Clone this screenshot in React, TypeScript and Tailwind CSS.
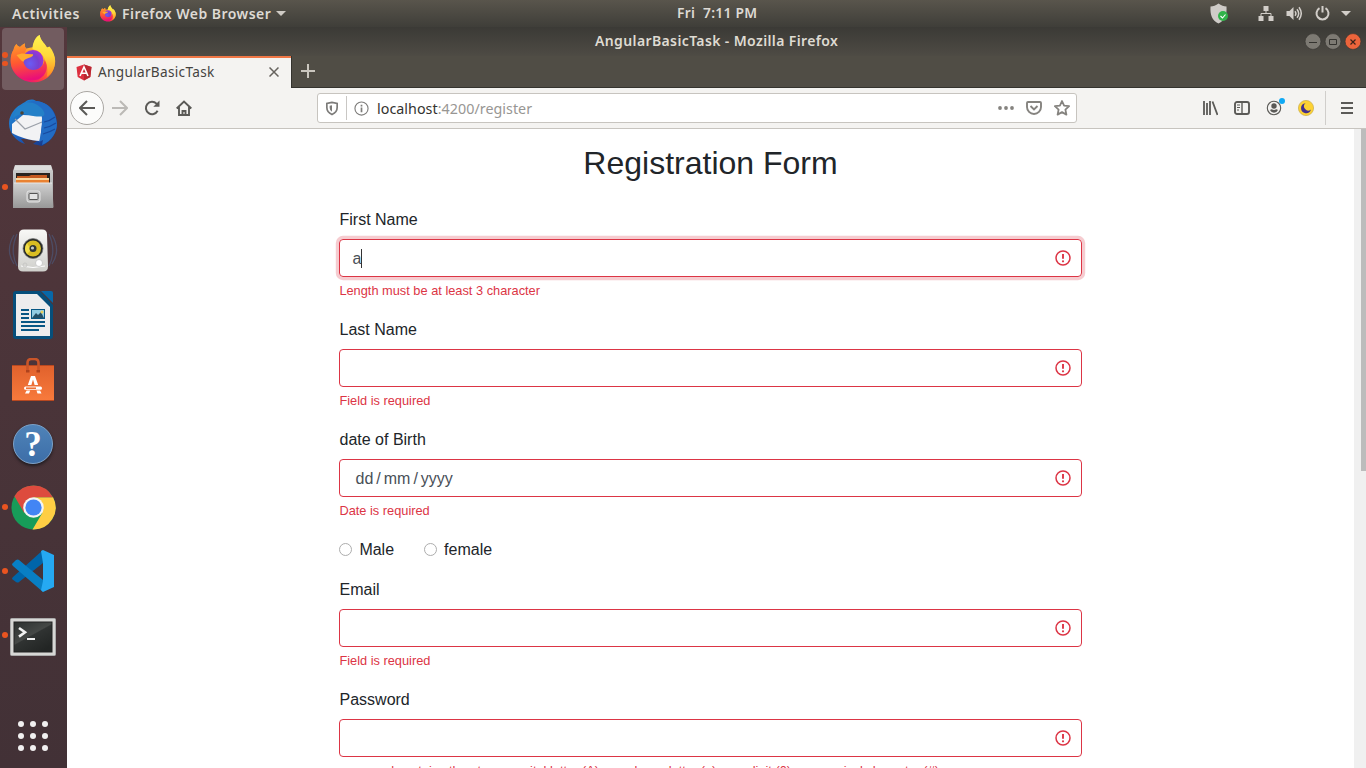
import React from "react";

const ui = "font-['Noto_Sans',sans-serif]";

function Firefox({ id, className }: { id: string; className: string }) {
  return (
    <svg viewBox="0 0 46 48" className={className}>
      <defs>
        <linearGradient id={`${id}a`} x1="0.8" y1="0" x2="0.25" y2="1">
          <stop offset="0" stopColor="#fff44f" />
          <stop offset="0.35" stopColor="#ffb52a" />
          <stop offset="0.7" stopColor="#ff4b3c" />
          <stop offset="1" stopColor="#e8087c" />
        </linearGradient>
        <radialGradient id={`${id}b`} cx="0.35" cy="0.65" r="0.7">
          <stop offset="0" stopColor="#6a5cf5" />
          <stop offset="0.6" stopColor="#7740d0" />
          <stop offset="1" stopColor="#a232d8" />
        </radialGradient>
        <linearGradient id={`${id}c`} x1="0" y1="0" x2="0" y2="1">
          <stop offset="0" stopColor="#fff44f" />
          <stop offset="0.5" stopColor="#ffd83a" />
          <stop offset="1" stopColor="#ff8a1f" />
        </linearGradient>
        <linearGradient id={`${id}d`} x1="0.2" y1="0" x2="0.4" y2="1">
          <stop offset="0" stopColor="#ff9a2a" />
          <stop offset="0.5" stopColor="#ff5a30" />
          <stop offset="1" stopColor="#ea0f78" />
        </linearGradient>
      </defs>
      <path d="M3.500 15c.3-2 1.500-4.500 3-6 .8 2 2 2.500 3.500 3 1.500-1.500 3-3 5-3.500-.5 2 0 4 1.300 5L23.500 12c-.5-5 2.200-10.500 6.200-12 .4 5 4.800 8 7.300 12.500l2.500 1c3 3.500 5.700 8 5.500 13.500C44.500 39 35.500 47.300 23.500 47.300S.7 38 .7 26c0-4.500.8-8 2.800-11z" fill={`url(#${id}a)`} />
      <path d="M22.500 14c0-6 3.200-12 7.200-14 .4 5 4.800 8 7.300 12.500l2.500-1c3.500 4 5.700 9.500 5.700 14.500 0 7-3.500 13-8.500 16 2.500-10-1.200-21-8.700-26z" fill={`url(#${id}c)`} />
      <circle cx="23" cy="25.500" r="10.500" fill={`url(#${id}b)`} />
      <path d="M3.500 15c.3-2 1.500-4.500 3-6 .8 2 2 2.500 3.500 3 1.500-1.500 3-3 5-3.500-.5 2 0 4 1.300 5.500L14 20c-1 2-1.500 4-.5 7 1.200 5 5 8 9.500 8 6.500 0 11-4.500 11.500-10 4.500 6 2.500 15-6 19.500C16 47.500 1 41 .7 26c0-4.500.8-8 2.800-11z" fill={`url(#${id}d)`} />
      <path d="M6.500 20c4-1.800 7-2 11-1l5.500.3c.8 1.700-2 3.200-5 3.900-3 .8-4 2-4.500 3.500-2-.5-4.500-3.500-7-6.700z" fill="#ffa92e" />
    </svg>
  );
}

function Thunderbird() {
  return (
    <svg viewBox="0 0 48 48" className="w-12 h-12">
      <defs>
        <linearGradient id="tb" x1="0" y1="0" x2="1" y2="1">
          <stop offset="0" stopColor="#2491d8" />
          <stop offset=".5" stopColor="#1c5dbb" />
          <stop offset="1" stopColor="#162c76" />
        </linearGradient>
      </defs>
      <path d="M16 3C20 0 24 0 27 2c12 1 21 10 21 23 0 10-7 18-15 22l-9-2 4-3-12-2-4 0 4 5C7 42 0 34 0 25c0-7 3-12 7-16 3-3 6-4 9-6z" fill="url(#tb)" />
      <path d="M3 25 14 16l20 1-3 25C22 42 10 38 3 34z" fill="#f2f2f4" />
      <path d="M6 20l10 10 17-7" stroke="#9ba0a9" strokeWidth="1.200" fill="none" />
      <path d="M17 3c9 1 15 7 16 16 0 9-1 17-3 24l4-2-1 5c10-4 15-13 15-21C47 11 37 2 26 2z" fill="#226cc4" />
      <path d="M15 5c-7 4-9 8-11 14 3-2 6-4 10-4s14 4 20 2c3-1 1-6-3-9-4-4-11-6-16-3z" fill="#2480c8" />
      <path d="M35 23q6-1 11-5M35 29q6-1 12-5M34 35q7-2 12-5" stroke="#184a9f" strokeWidth="1.200" fill="none" />
      <circle cx="13" cy="14" r="1.800" fill="#4c4335" />
    </svg>
  );
}

function Files() {
  return (
    <svg viewBox="0 0 42 44" className="w-[42px] h-11">
      <defs>
        <linearGradient id="fi" x1="0" y1="0" x2="0" y2="1">
          <stop offset="0" stopColor="#d0d0d0" />
          <stop offset="1" stopColor="#999" />
        </linearGradient>
      </defs>
      <path d="M3 0h36l2 6v37H1V6z" fill="url(#fi)" />
      <path d="M3 1h36l1 4H2z" fill="#ddd" />
      <path d="M4 8h34v11H4z" fill="#29231f" />
      <path d="M5 11h12l2-1h16v8H5z" fill="#c75a20" />
      <path d="M4 13h33v2H4z" fill="#fbd59d" />
      <path d="M4 15h33v4H4z" fill="#e98232" />
      <path d="M2 18h38l1.500 24.500h-40z" fill="url(#fi)" />
      <path d="M2 18h38" stroke="#e8e8e8" />
      <rect x="15" y="26" width="13" height="11" rx="2" fill="#bdbdbd" stroke="#e6e6e6" />
      <rect x="17" y="28.500" width="9" height="6" rx="1" fill="#e3e3e3" stroke="#555" />
    </svg>
  );
}

function Rhythmbox() {
  return (
    <svg viewBox="0 0 50 44" className="w-[50px] h-11">
      <defs>
        <linearGradient id="rh" x1="0" y1="0" x2="0" y2="1">
          <stop offset="0" stopColor="#f8f8f6" />
          <stop offset="1" stopColor="#cfcfcb" />
        </linearGradient>
      </defs>
      <path d="M6 6C0 16 0 26 6 35M9 5C4 16 4 27 9 37M44 6c6 10 6 20 0 29M41 5c5 11 5 22 0 32" stroke="#4d5b80" strokeWidth="1.300" fill="none" opacity=".6" />
      <path d="M16 .5h18q5 0 5 5l1 32q0 5-5 5H15q-5 0-5-5l1-32q0-5 5-5z" fill="url(#rh)" />
      <path d="M13 37q12 3 24 0" stroke="#fff" fill="none" />
      <circle cx="25" cy="19.500" r="10" fill="#272a28" stroke="#777" strokeWidth=".7" />
      <circle cx="25" cy="19.500" r="8" fill="#d9bd22" />
      <path d="M19 14q-4 6 0 11l4-4z" fill="#f1dd49" />
      <circle cx="25" cy="19.500" r="3.500" fill="#303634" />
      <circle cx="24.500" cy="19" r="1.600" fill="#c4cbc9" />
      <circle cx="31" cy="34" r="3.500" fill="#fff" stroke="#bbb" strokeWidth=".7" />
      <circle cx="17" cy="36" r="2" fill="none" stroke="#c7c7c5" />
    </svg>
  );
}

function Writer() {
  return (
    <svg viewBox="0 0 40 48" className="w-10 h-12">
      <path d="M3 0h24l13 14v31q0 3-3 3H3q-3 0-3-3V3Q0 0 3 0z" fill="#064f7b" />
      <path d="M28 0h10q2 0 2 2v10z" fill="#0868a8" />
      <path d="M3 3h21l13 13v29H3z" fill="#ededed" />
      <path d="M8 19h8M8 23h8M8 27h8M8 31h24M8 35h24M8 39h18" stroke="#075784" strokeWidth="2" />
      <rect x="18" y="18" width="14" height="10" fill="#075784" />
      <path d="M19 19h12v8H19z" fill="#91cce3" />
      <path d="m19 27 4-5 2 2 3-3 3 6z" fill="#234f66" />
      <circle cx="29" cy="21" r="1.500" fill="#e8ce5a" />
    </svg>
  );
}

function Software() {
  return (
    <svg viewBox="0 0 42 43" className="w-[42px] h-[43px]">
      <defs>
        <linearGradient id="sw" x1="0" y1="0" x2="0" y2="1">
          <stop offset="0" stopColor="#e0612c" />
          <stop offset="1" stopColor="#f87a3c" />
        </linearGradient>
      </defs>
      <path d="M0 7h42v35.500H0z" fill="url(#sw)" />
      <path d="M0 7.500h42M0 42.500h42" stroke="#b84820" />
      <path d="M15.500 14V5q0-4 4-4h3q4 0 4 4v9" fill="none" stroke="#c95529" strokeWidth="2.600" />
      <path d="M14 12h3.500v2.500H14zM24.500 12H28v2.500h-3.500z" fill="#ad421d" />
      <path d="M19 18h4l3.200 9h-3.600L21 21.500 19.400 27h-3.600zM14.600 32.500h3.600L17 35.500h-4zM24.500 32.500h3.600l1.400 3h-4z" fill="#fff" />
      <path d="M13.500 28.500h15q1.500 0 1.500 1.700t-1.500 1.600h-15q-1.500 0-1.500-1.600t1.500-1.700z" fill="#fff" />
      <path d="M14 30.200h10" stroke="#ef6b2d" strokeWidth="1.500" />
    </svg>
  );
}

function Help() {
  return (
    <div className="mt-[2px] flex size-10 items-center justify-center rounded-full border-[1.5px] border-[#7ba2c9] bg-linear-to-b from-[#4f83b8] to-[#3d6ea8] font-['Liberation_Serif',serif] text-[35px] leading-none font-bold text-white shadow-[0_2px_3px_#221d22]">?</div>
  );
}

function Chrome() {
  return (
    <svg viewBox="0 0 46 46" className="w-[45px] h-[45px]">
      <circle cx="23" cy="23" r="22.500" fill="#179c59" />
      <path d="M23 12.500h20A22.500 22.500 0 0 1 22 45.500L32 28.500z" fill="#ffce44" />
      <path d="M3.500 11.500A22.500 22.500 0 0 1 42.800 12.500H23L13.500 28.500z" fill="#dd4b3e" />
      <circle cx="23" cy="23" r="10.500" fill="#f4f4f4" />
      <circle cx="23" cy="23" r="8.300" fill="#4285f4" />
    </svg>
  );
}

function Code() {
  return (
    <svg viewBox="0 0 42 42" className="w-[42px] h-[42px]">
      <path d="m0 29 4 3q2 1 3 0L31 13V0L1 27q-1 1-1 2z" fill="#0065a9" />
      <path d="m0 14 4-4q2-1 3 0l24 20v12L1 16q-1-1-1-2z" fill="#087fc4" />
      <path d="M31 0l11 5v32l-11 5-2-2 2-9V13l-2-12z" fill="#25a9f2" />
    </svg>
  );
}

function Terminal() {
  return (
    <svg viewBox="0 0 46 38" className="w-[46px] h-[38px]">
      <defs>
        <linearGradient id="te" x1="0" y1="0" x2=".7" y2="1">
          <stop offset="0" stopColor="#2c302f" />
          <stop offset=".5" stopColor="#454846" />
          <stop offset=".53" stopColor="#303332" />
          <stop offset="1" stopColor="#222524" />
        </linearGradient>
      </defs>
      <rect x=".5" y=".5" width="45" height="37" rx="1" fill="#d7d7d5" stroke="#aaa" />
      <rect x="4" y="4" width="38" height="30" fill="url(#te)" stroke="#222" />
      <path d="m9 10 6 4.300-6 4.300" stroke="#f2f2f2" strokeWidth="2.600" fill="none" />
      <path d="M17 21h8" stroke="#eee" strokeWidth="2" />
    </svg>
  );
}

function Grid9() {
  return (
    <div className="grid grid-cols-3 gap-1.5">
      {Array.from({ length: 9 }, (_, i) => (
        <span key={i} className="size-1.5 rounded-full bg-[#f1f0f0]" />
      ))}
    </div>
  );
}

const dock = [
  { icon: <Firefox id="dk" className="h-12 w-[46px]" />, dots: 2, active: true },
  { icon: <Thunderbird />, dots: 0 },
  { icon: <Files />, dots: 1 },
  { icon: <Rhythmbox />, dots: 0 },
  { icon: <Writer />, dots: 0 },
  { icon: <Software />, dots: 0 },
  { icon: <Help />, dots: 0 },
  { icon: <Chrome />, dots: 1 },
  { icon: <Code />, dots: 1 },
  { icon: <Terminal />, dots: 1, low: true },
];

function Dock() {
  return (
    <aside className="flex w-[67px] shrink-0 flex-col bg-linear-to-b from-[#54373c] via-[#4a3439] to-[#423136]">
      {dock.map((d, i) => (
        <div key={i} className="relative flex h-16 shrink-0 items-center justify-center">
          {d.active && <div className="absolute top-px left-0.5 h-[62px] w-[62px] rounded bg-[#725c60]" />}
          <div className={`relative -ml-px ${d.low ? "pt-1" : ""}`}>{d.icon}</div>
          <div className="absolute left-[2px] flex flex-col gap-[3px]">
            {Array.from({ length: d.dots }, (_, k) => (
              <span key={k} className="size-[5.5px] rounded-full bg-[#e95420]" />
            ))}
          </div>
        </div>
      ))}
      <div className="mt-auto flex justify-center pr-px pb-[17px]">
        <Grid9 />
      </div>
    </aside>
  );
}

function TopBar() {
  return (
    <header className={`relative flex h-[27px] shrink-0 items-center bg-linear-to-b from-[#59554c] to-[#3f3e39] font-semibold text-[#dedad4] ${ui}`}>
      <span className="ml-3 w-[68px] pb-px text-[14px] tracking-[0.55px] whitespace-nowrap">Activities</span>
      <Firefox id="tp" className="ml-5 h-[17px] w-4" />
      <span className="ml-[6px] w-[150px] pb-px text-[14px] tracking-[0.47px] whitespace-nowrap">Firefox Web Browser</span>
      <svg viewBox="0 0 10 5" className="ml-1 h-[5px] w-[10px]"><path d="M0 0h10L5 5z" fill="#cfcbc5" /></svg>
      <span className="absolute left-[677px] text-[13.8px] tracking-[0.3px] whitespace-pre">Fri  7:11 PM</span>
      <div className="ml-auto flex items-center">
        <svg viewBox="0 0 20 22" className="mr-[29px] h-[22px] w-5">
          <path d="M9.500 .5C7 2.500 4 3.500 1.500 3.500 1 12 3 17.500 9.500 20.500 16 17.500 18 12 17.500 3.500 15 3.500 12 2.500 9.500.5z" fill="#cecbc7" />
          <circle cx="14" cy="13" r="5" fill="#31b34a" />
          <path d="m11.500 13 2 2 3-3.500" fill="none" stroke="#fff" strokeWidth="1.100" />
        </svg>
        <svg viewBox="0 0 16 16" className="h-4 w-4 text-[#d2cec9]" fill="currentColor"><path d="M5.500 0h5v5h-5zM.5 10h5v5h-5zM10.500 10h5v5h-5z" /><path d="M8 5v2.500M3 10V7.500h10V10" stroke="currentColor" fill="none" /></svg>
        <svg viewBox="0 0 16 16" className="ml-3 h-4 w-4" fill="#d2cec9"><path d="M.5 5h3l4-4v13l-4-4h-3z" /><path d="M9 5.200q1.800 2.300 0 4.600M11 3.200q3.400 4.300 0 8.600M13 1.200q4.500 6.300 0 12.600" stroke="#d2cec9" strokeWidth="1.500" fill="none" /></svg>
        <svg viewBox="0 0 16 16" className="ml-3 h-4 w-4"><path d="M5.500 2.200a6 6 0 1 0 6 0M8.500 0v6.500" stroke="#d2cec9" strokeWidth="2" fill="none" /></svg>
        <svg viewBox="0 0 10 5" className="mr-[15px] ml-[11px] h-[5px] w-[10px]"><path d="M0 0h10L5 5z" fill="#d2cec9" /></svg>
      </div>
    </header>
  );
}

function TitleBar() {
  return (
    <div className={`relative flex h-[29px] items-center justify-end gap-1 bg-linear-to-b from-[#3b3a36] to-[#4e4b44] pr-[5px] ${ui}`}>
      <span className="absolute left-[528px] pb-0.5 text-[14px] font-semibold tracking-[0.38px] whitespace-nowrap text-[#dfdbd2]">AngularBasicTask - Mozilla Firefox</span>
      <svg viewBox="0 0 16 16" className="h-4 w-4 overflow-visible"><circle cx="8" cy="7.500" r="7.900" fill="#7d7a73" stroke="#34332f" strokeWidth=".6" /><path d="M4 8.500h8" stroke="#34332f" /></svg>
      <svg viewBox="0 0 16 16" className="h-4 w-4 overflow-visible"><circle cx="8" cy="7.500" r="7.900" fill="#7d7a73" stroke="#34332f" strokeWidth=".6" /><path d="M4.500 5.500h7v5h-7z" fill="none" stroke="#34332f" /></svg>
      <svg viewBox="0 0 16 16" className="h-4 w-4 overflow-visible"><circle cx="8" cy="7.500" r="7.900" fill="#ec643b" stroke="#34332f" strokeWidth=".6" /><path d="m5.500 5.500 5 5m0-5-5 5" stroke="#3b231a" strokeWidth="1.200" /></svg>
    </div>
  );
}

function Tabs() {
  return (
    <div className="flex h-8 border-b border-[#34332e] bg-[#504d45]">
      <div className={`-mb-px flex h-8 w-[224px] items-center border-t-2 border-[#f07746] bg-[#f4f3f1] text-[13.6px] text-[#45433f] ${ui}`}>
        <svg viewBox="0 0 16 17" className="mb-0.5 ml-[9px] h-[17px] w-4"><path d="M8 .5 15.500 3l-1.200 10L8 16.500 1.700 13 .5 3z" fill="#dd3040" /><path d="M8 .5 15.500 3l-1.200 10L8 16.500z" fill="#b92832" /><path d="m4 12 4-9 4 9M5.500 9.300h5" fill="none" stroke="#fff" strokeWidth="1.600" /></svg>
        <span className="ml-1.5 w-[121px] pb-0.5 tracking-[0.32px] whitespace-nowrap">AngularBasicTask</span>
        <svg viewBox="0 0 10 10" className="mr-3 mb-0.5 ml-auto h-[10px] w-[10px]"><path d="m.5.5 9 9m0-9-9 9" stroke="#66635e" strokeWidth="1.500" /></svg>
      </div>
      <div className="w-px bg-[#34332e]" />
      <svg viewBox="0 0 14 14" className="mt-2 ml-[9px] h-[14px] w-[14px]"><path d="M7 0v14M0 7h14" stroke="#cac6be" strokeWidth="2" /></svg>
    </div>
  );
}

function Toolbar() {
  return (
    <div className="relative flex h-[41px] items-center border-b border-[#c7c4bf] bg-[#f4f3f1] text-[#5b5a57]">
      <div className="ml-[3px] flex size-[34px] items-center justify-center rounded-full border border-[#aaa7a3] bg-[#fcfcfb]">
        <svg viewBox="0 0 16 16" className="h-4 w-4"><path d="M16 8H1m7-7L1 8l7 7" fill="none" stroke="currentColor" strokeWidth="2" /></svg>
      </div>
      <svg viewBox="0 0 16 16" className="ml-2 h-4 w-4"><path d="M0 8h15M8 1l7 7-7 7" fill="none" stroke="#bbb9b6" strokeWidth="2" /></svg>
      <svg viewBox="0 0 16 16" className="ml-4 h-4 w-4"><path d="M13.600 10.800A6.200 6.200 0 1 1 12.500 3.600L14 5" fill="none" stroke="currentColor" strokeWidth="2" /><path d="M15.500.5v6.200H9.300z" fill="currentColor" /></svg>
      <svg viewBox="0 0 16 16" className="ml-4 h-4 w-4"><path d="m.7 8.500 7.300-7 7.300 7M3 7v8h10V7M6.500 15v-4h3v4" fill="none" stroke="currentColor" strokeWidth="1.900" /></svg>
      <div className={`absolute left-[250px] flex h-[30px] w-[760px] items-center rounded-[3px] border border-[#c7c4bf] bg-white text-[#989693] ${ui}`}>
        <svg viewBox="0 0 14 16" className="ml-[7px] h-[15px] w-[14px]"><path d="M7 1.500 1.500 2.500V7q0 5 5.500 7.500Q12.500 12 12.500 7V2.500z" fill="none" stroke="#7c7b79" strokeWidth="1.800" /><path d="M7 4.500 4.500 5V7.500q0 2.500 2.500 4z" fill="#7c7b79" /></svg>
        <div className="ml-[7px] h-6 w-px bg-[#c9c7c4]" />
        <svg viewBox="0 0 16 16" className="ml-[7px] h-[15px] w-[15px]"><circle cx="8" cy="8" r="7" fill="none" stroke="#7d7c7a" strokeWidth="1.200" /><path d="M8 7v5M8 4v1.800" stroke="#7d7c7a" strokeWidth="1.800" /></svg>
        <span className="ml-2 pt-0.5 text-[14.3px] tracking-[0.03px] whitespace-nowrap"><span className="text-[#343330]">localhost</span>:4200/register</span>
        <div className="mr-[6px] ml-auto flex items-center gap-3">
          <svg viewBox="0 0 16 16" className="h-4 w-4" fill="#85837f"><circle cx="2" cy="8" r="1.900" /><circle cx="8" cy="8" r="1.900" /><circle cx="14" cy="8" r="1.900" /></svg>
          <svg viewBox="0 0 16 16" className="h-4 w-4" fill="none" stroke="#85837f" strokeWidth="1.900"><path d="M2 2h12q1 0 1 1v4a7 7 0 0 1-14 0V3q0-1 1-1z" /><path d="m4.500 6 3.500 3.500L11.500 6" /></svg>
          <svg viewBox="0 0 16 16" className="h-4 w-4" fill="none" stroke="#85837f" strokeWidth="1.800" strokeLinejoin="round"><path d="m8 1 2.100 4.600 5 .6-3.700 3.400 1 5L8 12.100 3.600 14.600l1-5L.9 6.200l5-.6z" /></svg>
        </div>
      </div>
      <div className="ml-auto flex items-center">
        <svg viewBox="0 0 16 16" className="h-4 w-4"><path d="M2 1v14M5 3v12M8 1v14M10.500 1.500 15.500 15" stroke="currentColor" strokeWidth="1.800" /></svg>
        <svg viewBox="0 0 16 14" className="ml-4 h-[14px] w-4" fill="none" stroke="currentColor" strokeWidth="1.900"><rect x="1" y="1" width="14" height="12" rx="2" /><path d="M8 1v12" strokeWidth="1.400" /><path d="M3 4h3M3 6.500h3M3 9h2" strokeWidth="1" /></svg>
        <div className="relative ml-4 size-4">
          <svg viewBox="0 0 16 16" className="h-4 w-4"><circle cx="8" cy="8" r="6.700" fill="none" stroke="currentColor" strokeWidth="1.100" /><circle cx="8" cy="6" r="2.700" fill="currentColor" /><path d="M4 10q1-.5 1.800-.7 2.200 1.300 4.400 0 .8.200 1.800.7-1.300 2.700-4 2.700T4 10z" fill="currentColor" /></svg>
          <span className="absolute -top-[2px] left-[13px] size-1.5 rounded-full bg-[#10a9f4]" />
        </div>
        <svg viewBox="0 0 16 16" className="ml-4 h-4 w-4"><circle cx="8" cy="8" r="7.600" fill="#fdd233" stroke="#c8ac4d" strokeWidth=".7" /><path d="M7.500 3.200a5 5 0 1 0 5.400 6.200A4 4 0 0 1 7.500 3.200z" fill="#42308c" /></svg>
        <div className="ml-[11px] h-[34px] w-px bg-[#d0cecb]" />
        <svg viewBox="0 0 12 12" className="mr-[13px] ml-[15px] h-3 w-3"><path d="M0 1h12M0 6h12M0 11h12" stroke="currentColor" strokeWidth="2" /></svg>
      </div>
    </div>
  );
}

function Field({ label, error, value, focused, date }: { label: string; error: string; value?: string; focused?: boolean; date?: boolean }) {
  return (
    <div className="h-[110px] shrink-0">
      <div className="h-6 pt-px pl-[0.5px] leading-6">{label}</div>
      <div className={`mt-2 flex h-[38px] items-center rounded-[4px] border border-[#dc3545] px-3 text-[#495057] ${focused ? "shadow-[0_0_0_3.2px_rgba(220,53,69,0.25)]" : ""}`}>
        {value && <span className="pt-px pl-[0.5px]">{value}</span>}
        {focused && <span className="h-[19px] w-px bg-[#333]" />}
        {date && <span className="ml-[3.5px] flex gap-[3px] pt-px"><span>dd</span><span>/</span><span>mm</span><span>/</span><span>yyyy</span></span>}
        <svg viewBox="0 0 16 16" className="-mr-[2px] ml-auto h-4 w-4"><circle cx="8" cy="8" r="7" fill="none" stroke="#dc3545" strokeWidth="1.500" /><path d="M8 4v4.800" stroke="#dc3545" strokeWidth="1.900" /><circle cx="8" cy="11.300" r="1.100" fill="#dc3545" /></svg>
      </div>
      <div className="mt-1 pl-[0.4px] text-[12.8px] leading-[19.2px] whitespace-nowrap text-[#dc3545]">{error}</div>
    </div>
  );
}

function Radio({ label }: { label: string }) {
  return (
    <div className="flex items-center gap-[7px]">
      <span className="size-[13px] rounded-full border border-[#adadad] bg-white" />
      <span className="pt-px">{label}</span>
    </div>
  );
}

function Page() {
  return (
    <main className="flex min-h-0 flex-1 overflow-hidden bg-white font-['Liberation_Sans',sans-serif] text-base text-[#212529]">
      <div className="flex flex-1 justify-center overflow-hidden">
        <form className="flex w-[743px] flex-col pt-[15px]">
          <h2 className="mb-[25px] h-[38px] text-center text-[32px] leading-[38px]">Registration Form</h2>
          <Field label="First Name" error="Length must be at least 3 character" value="a" focused />
          <Field label="Last Name" error="Field is required" />
          <Field label="date of Birth" error="Date is required" date />
          <div className="flex h-10 shrink-0 items-start gap-[30px] pl-[0.4px]">
            <Radio label="Male" />
            <Radio label="female" />
          </div>
          <Field label="Email" error="Field is required" />
          <Field label="Password" error="password contains the at one capital letter (A) , one lower letter (a), one digit (0), one speical character (#)" />
        </form>
      </div>
      <div className="flex w-3 justify-end bg-[#f0f0f0]">
        <div className="h-[342px] w-[5px] bg-[#bcbcbc]" />
      </div>
    </main>
  );
}

export default function App() {
  return (
    <div className="flex h-[768px] w-[1366px] flex-col overflow-hidden">
      <TopBar />
      <div className="flex min-h-0 flex-1">
        <Dock />
        <div className="flex min-w-0 flex-1 flex-col">
          <TitleBar />
          <Tabs />
          <Toolbar />
          <Page />
        </div>
      </div>
    </div>
  );
}
